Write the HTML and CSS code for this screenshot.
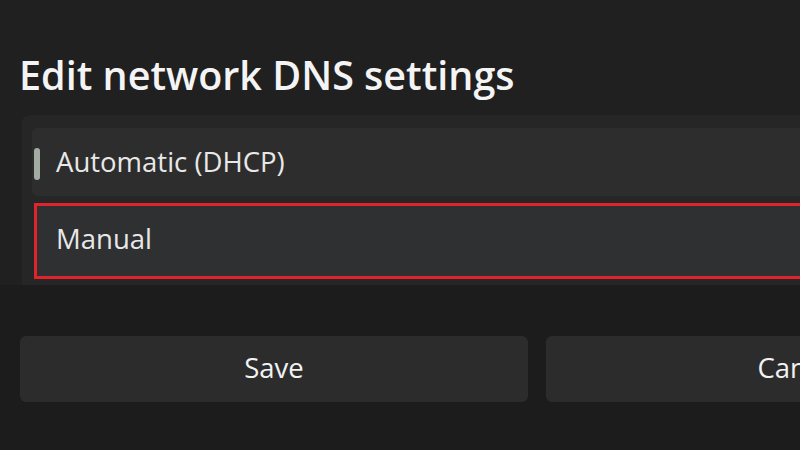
FILE: index.html
```html
<!DOCTYPE html>
<html lang="en">
<head>
<meta charset="utf-8">
<title>Edit network DNS settings</title>
<link rel="stylesheet" href="styles.css">
</head>
<body>
<div class="dialog">
  <div class="content">
    <h1 class="title">Edit network DNS settings</h1>
    <div class="flyout">
      <div class="option selected">
        <span class="indicator"></span>
        <span class="label">Automatic (DHCP)</span>
      </div>
      <div class="option highlighted">
        <span class="label">Manual</span>
      </div>
    </div>
  </div>
  <div class="footer">
    <button class="btn">Save</button>
    <button class="btn">Cancel</button>
  </div>
</div>
</body>
</html>
```
FILE: styles.css
```css
html, body {
  margin: 0;
  padding: 0;
}
body {
  width: 800px;
  height: 450px;
  overflow: hidden;
  background: #1c1c1c;
  font-family: "Open Sans", "Noto Sans", sans-serif;
  color: #f2f2f2;
}
.dialog {
  width: 1100px;
  display: flex;
  flex-direction: column;
}
.content {
  background: #202020;
  height: 285px;
  display: flex;
  flex-direction: column;
}
.title {
  margin: 0;
  padding: 47px 0 0 19px;
  font-size: 39.5px;
  line-height: 56px;
  font-weight: 600;
  color: #f4f4f4;
  height: 68px;
  box-sizing: content-box;
  white-space: nowrap;
}
.flyout {
  margin-left: 22px;
  flex: 1;
  background: #262626;
  border-top-left-radius: 8px;
  padding: 13px 0 5px 10px;
  display: flex;
  flex-direction: column;
  gap: 7px;
}
.option {
  display: flex;
  align-items: center;
  position: relative;
  font-size: 27.5px;
  color: #e8e8e8;
  box-sizing: border-box;
}
.option.selected {
  height: 68px;
  background: #2d2d2d;
  border-radius: 5px 0 0 5px;
  padding-left: 24px;
}
.indicator {
  position: absolute;
  left: 2px;
  top: 20px;
  width: 6px;
  height: 32px;
  border-radius: 3px;
  background: #a3aca3;
}
.option.highlighted {
  height: 76px;
  margin-left: 2px;
  background: #2f3032;
  border: 3px solid #e2232b;
  border-right: none;
  padding: 0 0 4px 19px;
}
.label {
  line-height: 1;
}
.footer {
  padding: 51px 0 0 20px;
  display: flex;
  gap: 18px;
}
.btn {
  width: 508px;
  height: 66px;
  border: none;
  border-radius: 6px;
  background: #2c2c2c;
  color: #f2f2f2;
  font-family: "Open Sans", "Noto Sans", sans-serif;
  font-size: 27.5px;
  padding: 0 0 4px;
}
```
